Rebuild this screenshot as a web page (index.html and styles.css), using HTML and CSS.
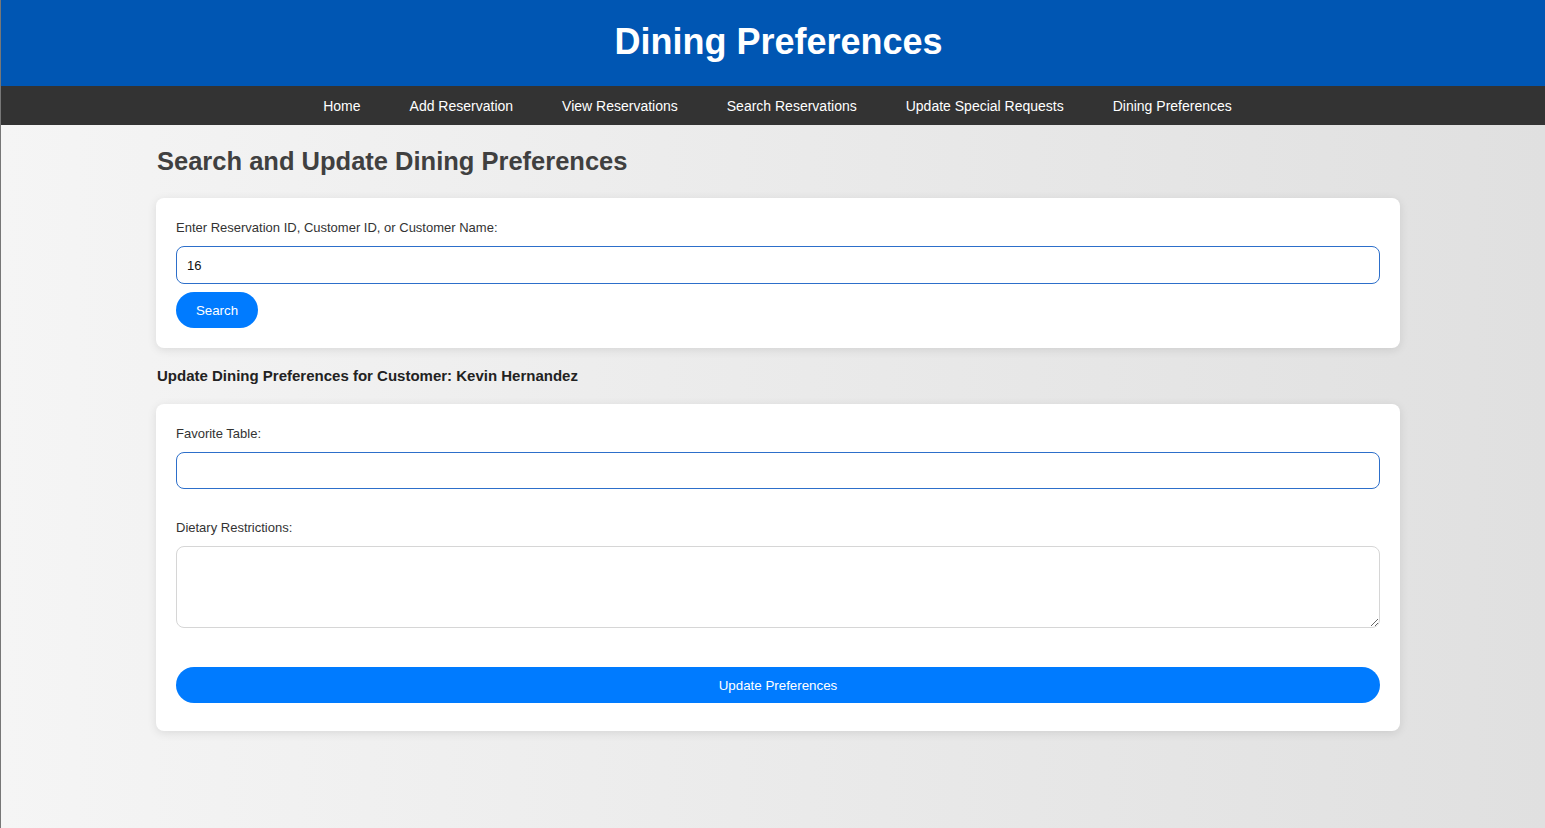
FILE: index.html
```html
<!DOCTYPE html>
<html lang="en">
<head>
<meta charset="utf-8">
<title>Dining Preferences</title>
<link rel="stylesheet" href="styles.css">
</head>
<body>
<header class="site-header">
  <h1 class="site-title">Dining Preferences</h1>
</header>
<nav class="site-nav">
  <a href="#">Home</a>
  <a href="#">Add Reservation</a>
  <a href="#">View Reservations</a>
  <a href="#">Search Reservations</a>
  <a href="#">Update Special Requests</a>
  <a href="#">Dining Preferences</a>
</nav>
<main class="container">
  <h2 class="page-title">Search and Update Dining Preferences</h2>
  <form class="card search-card">
    <label class="field-label" for="q">Enter Reservation ID, Customer ID, or Customer Name:</label>
    <input class="text-input" id="q" type="text" value="16">
    <button class="btn btn-search" type="button">Search</button>
  </form>
  <h3 class="customer-title">Update Dining Preferences for Customer: Kevin Hernandez</h3>
  <form class="card update-card">
    <label class="field-label" for="table">Favorite Table:</label>
    <input class="text-input input-table" id="table" type="text">
    <label class="field-label label-spaced" for="diet">Dietary Restrictions:</label>
    <textarea class="text-area" id="diet"></textarea>
    <button class="btn btn-update" type="button">Update Preferences</button>
  </form>
</main>
</body>
</html>
```
FILE: styles.css
```css
* { box-sizing: border-box; }
html, body { height: 100%; }
body {
  margin: 0;
  font-family: "Liberation Sans", Arial, sans-serif;
  background: linear-gradient(to right, #f5f5f5, #e0e0e0);
  border-left: 1px solid #777;
  min-height: 828px;
}
.site-header {
  background: #0056b3;
  height: 86px;
  display: flex;
  align-items: center;
  justify-content: center;
  padding-left: 11px;
}
.site-title {
  margin: 0;
  color: #fff;
  font-size: 36px;
  font-weight: bold;
  line-height: 1;
  padding-bottom: 2px;
}
.site-nav {
  background: #333;
  height: 39px;
  display: flex;
  align-items: center;
  justify-content: center;
  gap: 49px;
  padding-left: 9px;
}
.site-nav a {
  color: #fff;
  text-decoration: none;
  font-size: 14px;
}
.container {
  width: 1244px;
  margin-left: 155px;
  padding-top: 21px;
}
.page-title {
  margin: 0 0 22px 1px;
  font-size: 25.5px;
  line-height: 30px;
  color: #404040;
  font-weight: bold;
}
.card {
  background: #fff;
  border-radius: 8px;
  box-shadow: 0 2px 10px rgba(0,0,0,0.1);
  padding: 20px;
  display: flex;
  flex-direction: column;
  align-items: flex-start;
}
.search-card { height: 150px; }
.update-card { padding-bottom: 28px; }
.field-label {
  font-size: 13px;
  line-height: 20px;
  color: #333;
  margin-bottom: 8px;
}
.label-spaced { margin-top: 29px; }
.text-input {
  width: 100%;
  height: 38px;
  border: 1px solid #2d6fca;
  border-radius: 8px;
  padding: 0 10px;
  font-family: "Liberation Sans", Arial, sans-serif;
  font-size: 13px;
  color: #111;
  outline: none;
}
.input-table { height: 37px; }
.text-area {
  width: 100%;
  height: 82px;
  border: 1px solid #d6d6d6;
  border-radius: 8px;
  padding: 10px;
  font-family: "Liberation Sans", Arial, sans-serif;
  font-size: 13px;
  resize: vertical;
  outline: none;
}
.btn {
  background: #007bff;
  color: #fff;
  border: none;
  border-radius: 18px;
  height: 36px;
  font-family: "Liberation Sans", Arial, sans-serif;
  font-size: 13.33px;
  cursor: pointer;
}
.btn-search {
  margin-top: 8px;
  width: 82px;
  padding: 0;
}
.btn-update {
  margin-top: 39px;
  width: 100%;
}
.customer-title {
  margin: 19px 0 19px 1px;
  font-size: 15px;
  line-height: 18px;
  color: #222;
  font-weight: bold;
}
```
